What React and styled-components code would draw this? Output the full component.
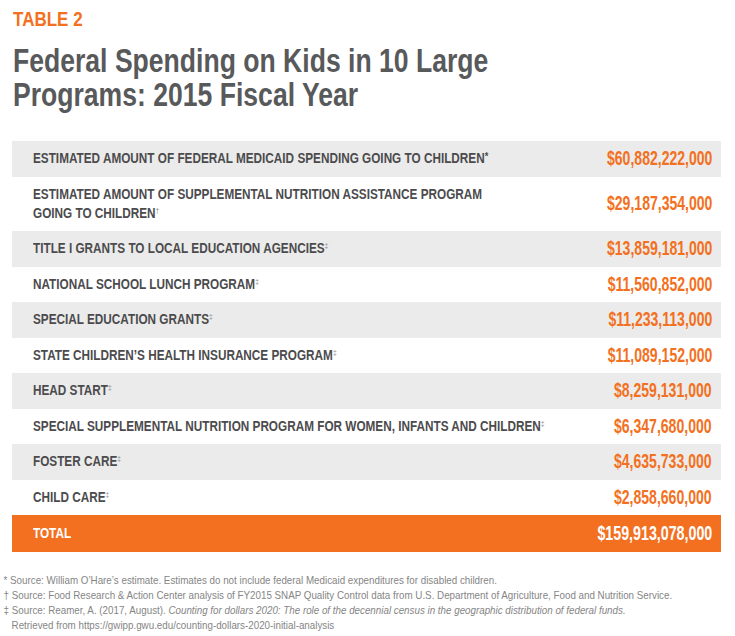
import React from 'react';
import styled, { createGlobalStyle } from 'styled-components';

const ORANGE = '#f37021';

const GlobalStyle = createGlobalStyle`
  html, body {
    margin: 0;
    padding: 0;
    background: #ffffff;
  }
`;

const rows = [
  { label: 'Estimated amount of federal Medicaid spending going to children', mark: '*', value: '$60,882,222,000' },
  { label: 'Estimated amount of Supplemental Nutrition Assistance Program', label2: 'going to children', mark: '†', value: '$29,187,354,000' },
  { label: 'Title I grants to local education agencies', mark: '‡', value: '$13,859,181,000' },
  { label: 'National School Lunch Program', mark: '‡', value: '$11,560,852,000' },
  { label: 'Special education grants', mark: '‡', value: '$11,233,113,000' },
  { label: 'State Children’s Health Insurance Program', mark: '‡', value: '$11,089,152,000' },
  { label: 'Head Start', mark: '‡', value: '$8,259,131,000' },
  { label: 'Special Supplemental Nutrition Program for Women, Infants and Children', mark: '‡', value: '$6,347,680,000' },
  { label: 'Foster care', mark: '‡', value: '$4,635,733,000' },
  { label: 'Child care', mark: '‡', value: '$2,858,660,000' }
];

// the print face is a condensed gothic; squeeze Liberation Sans to its widths
const Squeeze = styled.span`
  display: inline-block;
  white-space: nowrap;
  transform: scaleX(${p => p.$x});
  transform-origin: ${p => (p.$right ? 'right' : 'left')} center;
`;

const Page = styled.div`
  width: 735px;
  height: 636px;
  overflow: hidden;
  font-family: 'Liberation Sans', Arial, sans-serif;
`;

const Header = styled.header`
  padding: 7px 0 0 13px;
`;

const Kicker = styled.div`
  color: ${ORANGE};
  font-size: 21px;
  line-height: 24px;
  font-weight: 700;
`;

const Title = styled.h1`
  margin: 13px 0 0;
  color: #58595b;
  font-size: 33px;
  line-height: 34px;
  font-weight: 700;
  white-space: nowrap;
  transform: scaleX(0.805);
  transform-origin: left top;
`;

const Table = styled.div`
  margin: 29px 14px 0 12px;
  display: flex;
  flex-direction: column;
`;

const Row = styled.div`
  display: flex;
  align-items: center;
  justify-content: space-between;
  padding: 8.25px 9px 8.25px 21px;
  background: ${p => (p.$shaded ? '#ebebeb' : '#ffffff')};
`;

const Label = styled.div`
  flex: 1;
  min-width: 0;
  color: #4b4b4d;
  font-size: 14px;
  line-height: 19px;
  font-weight: 700;
  text-transform: uppercase;
`;

const Mark = styled.sup`
  font-size: ${p => (p.$big ? '11px' : '8px')};
  line-height: 0;
  vertical-align: ${p => (p.$big ? '3px' : '5px')};
  color: ${p => (p.$big ? '#4b4b4d' : '#8a8a8c')};
  font-weight: ${p => (p.$big ? 700 : 400)};
`;

const Value = styled.div`
  flex: none;
  color: ${ORANGE};
  font-size: 19.5px;
  line-height: 19px;
  font-weight: 700;
`;

const TotalRow = styled(Row)`
  background: ${ORANGE};
  padding-top: 9px;
  padding-bottom: 9px;
`;

const TotalLabel = styled(Label)`
  color: #ffffff;
`;

const TotalValue = styled(Value)`
  color: #ffffff;
`;

const Notes = styled.div`
  margin-top: 21px;
  padding-left: 4px;
  color: #858585;
  font-size: 11px;
  line-height: 15px;
  transform: scaleX(0.89);
  transform-origin: left top;
`;

const Note = styled.div`
  padding-left: ${p => (p.$indent ? '9px' : '0')};
  white-space: nowrap;
`;

export default function App() {
  return (
    <Page>
      <GlobalStyle />
      <Header>
        <Kicker>
          <Squeeze $x={0.81}>TABLE 2</Squeeze>
        </Kicker>
        <Title>
          Federal Spending on Kids in 10 Large
          <br />
          Programs: 2015 Fiscal Year
        </Title>
      </Header>
      <Table>
        {rows.map((r, i) => (
          <Row key={r.label} $shaded={i % 2 === 0}>
            <Label>
              <Squeeze $x={0.84}>
                {r.label}
                {r.label2 && <br />}
                {r.label2}
                <Mark $big={r.mark === '*'}>{r.mark}</Mark>
              </Squeeze>
            </Label>
            <Value>
              <Squeeze $x={0.72} $right>{r.value}</Squeeze>
            </Value>
          </Row>
        ))}
        <TotalRow>
          <TotalLabel>
            <Squeeze $x={0.84}>Total</Squeeze>
          </TotalLabel>
          <TotalValue>
            <Squeeze $x={0.73} $right>$159,913,078,000</Squeeze>
          </TotalValue>
        </TotalRow>
      </Table>
      <Notes>
        <Note>* Source: William O’Hare’s estimate. Estimates do not include federal Medicaid expenditures for disabled children.</Note>
        <Note>† Source: Food Research &amp; Action Center analysis of FY2015 SNAP Quality Control data from U.S. Department of Agriculture, Food and Nutrition Service.</Note>
        <Note>
          ‡ Source: Reamer, A. (2017, August). <i>Counting for dollars 2020: The role of the decennial census in the geographic distribution of federal funds.</i>
        </Note>
        <Note $indent>Retrieved from https://gwipp.gwu.edu/counting-dollars-2020-initial-analysis</Note>
      </Notes>
    </Page>
  );
}
